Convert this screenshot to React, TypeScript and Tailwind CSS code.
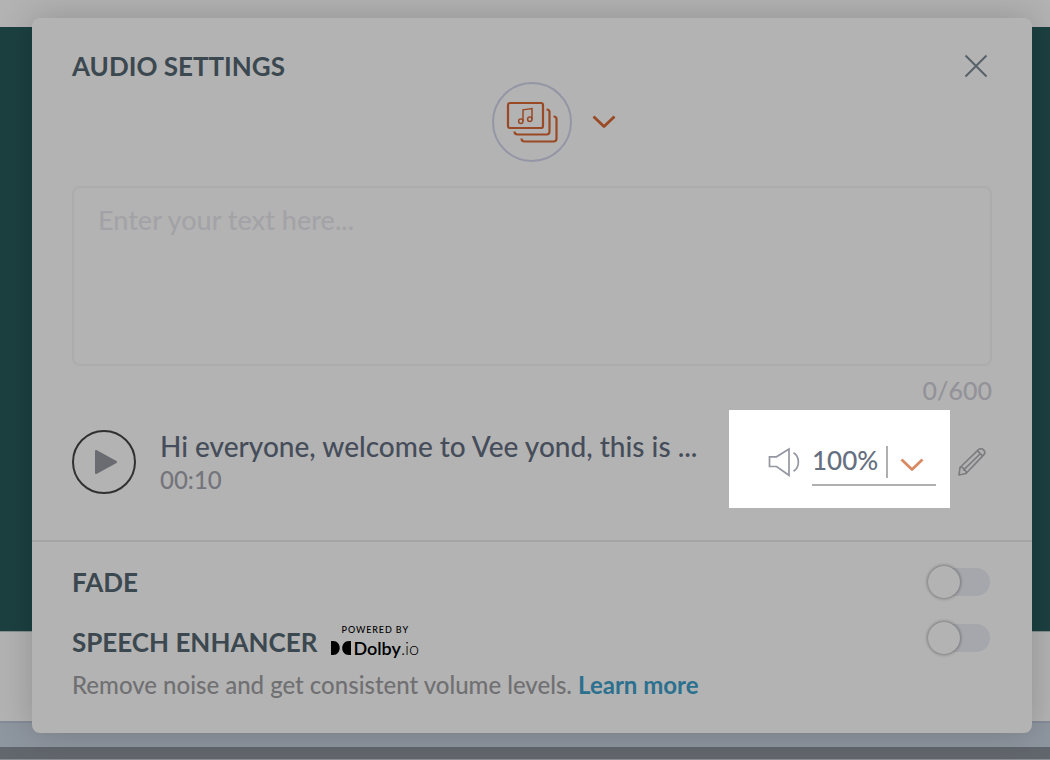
import { useState } from "react";

function Chevron({ className }: { className?: string }) {
  return (
    <svg viewBox="0 0 24 14" className={className} fill="none" stroke="currentColor" strokeWidth="2.8" aria-hidden="true">
      <path d="M1.5 1.5 12 11.5l10.5-10" strokeLinejoin="round" />
    </svg>
  );
}

function MusicLibraryIcon() {
  return (
    <svg viewBox="0 0 52 42" className="h-[42px] w-[52px]" fill="none" stroke="currentColor" strokeWidth="2.2" aria-hidden="true">
      <rect x="2" y="2" width="35" height="25" rx="2" />
      <path d="M40.5 8.500c2 0 3 .8 3 2.500v19.500c0 2-1 3-3 3H11.500c-2 0-3-1-3-3" />
      <path d="M47.5 15.500c2 0 3 .8 3 2.500v19.500c0 2-1 3-3 3H18.500c-2 0-3-1-3-3" />
      <g strokeWidth="1.5">
        <path d="M17 20.300V8.800l9-1.300v11" />
        <circle cx="14.800" cy="20.300" r="2.200" />
        <circle cx="23.800" cy="18.300" r="2.200" />
      </g>
    </svg>
  );
}

function SpeakerIcon() {
  return (
    <svg viewBox="0 0 32 30" className="h-[30px] w-8 shrink-0 text-[#9496a1]" fill="none" stroke="currentColor" strokeWidth="1.7" aria-hidden="true">
      <path d="M1.5 9.8h7L21 2v26.3l-12.5-8.800h-7z" />
      <path d="M25.5 5.800c6.500 4 6.500 14.500 0 18.500" />
    </svg>
  );
}

function PencilIcon() {
  return (
    <svg viewBox="0 0 28 28" className="size-7" fill="none" stroke="currentColor" strokeWidth="1.7" strokeLinejoin="round" aria-hidden="true">
      <path d="M1 27l1-7.500L20.500 1.700c1.500-1.300 3.500-1.200 5 .2 1.500 1.500 1.600 3.500.2 5L8 25.500z" />
      <path d="M2 19.500c2-.8 3.500.2 3.700 2.300 1.900.2 2.900 1.700 2.300 3.700M5.700 21.800 22 6M19.500 2.800l5.300 5.400" />
    </svg>
  );
}

function Toggle({ label }: { label: string }) {
  const [on, setOn] = useState(false);
  return (
    <label className="relative mr-0.5 flex h-7 w-[62px] shrink-0 cursor-pointer items-center rounded-full bg-[#a6a7ac]">
      <input
        type="checkbox"
        aria-label={label}
        checked={on}
        onChange={() => setOn(!on)}
        className="peer absolute inset-0 cursor-pointer opacity-0"
      />
      <span className="pointer-events-none absolute -top-0.5 left-0 size-8 rounded-full bg-[#b3b3b3] shadow-[0_0_3px_1px_rgba(0,0,0,0.3)] peer-checked:left-8" />
    </label>
  );
}

function DolbyMark() {
  return (
    <div className="flex flex-col items-center text-black">
      <span className="text-[9px] leading-[12px] font-medium tracking-widest">POWERED BY</span>
      <div className="flex items-center gap-0.5">
        <svg viewBox="0 0 20 14" className="h-3.5 w-5" fill="currentColor" aria-hidden="true">
          <path d="M0 0h2c9 0 9 14 0 14H0zM20 0h-2c-9 0-9 14 0 14h2z" />
        </svg>
        <span className="text-[18px] leading-[24px] font-semibold">
          Dolby<span className="font-light">.io</span>
        </span>
      </div>
    </div>
  );
}

export default function App() {
  const [text, setText] = useState("");
  return (
    <div className="relative min-h-screen font-[Lato,sans-serif] text-[#3c4850]">
      <div className="absolute inset-0 flex flex-col" aria-hidden="true">
        <div className="h-[27px] bg-[#b3b3b3]" />
        <div className="flex-1 bg-[#1c4040]" />
        <div className="h-[90px] border-t border-[#869090] bg-[#b3b3b3]" />
        <div className="h-[26px] border-t-2 border-[#858c97] bg-[#8e969f]" />
        <div className="h-[13px] border-b border-[#8b8f97] bg-[#62666d]" />
      </div>

      <div className="relative px-[18px] pt-[18px] pb-[27px] pl-8">
        <main role="dialog" aria-labelledby="title" className="rounded-lg bg-[#b3b3b3] shadow-[0_0_36px_rgba(0,0,0,0.2)]">
          <section className="border-b-2 border-[#a4a4a4] px-10 pt-8 pb-8">
            <header className="flex h-8 items-center justify-between">
              <h1 id="title" className="text-[26px] leading-8 font-bold">AUDIO SETTINGS</h1>
              <button type="button" aria-label="Close" className="p-1 text-[#596168]">
                <svg viewBox="0 0 24 24" className="size-6" fill="none" stroke="currentColor" strokeWidth="2" aria-hidden="true">
                  <path d="M1.5 1.5l21 21M22.5 1.5l-21 21" />
                </svg>
              </button>
            </header>

            <div className="grid grid-cols-[1fr_auto_1fr] items-center text-[#994a24]">
              <button type="button" aria-label="Audio library" className="col-start-2 flex size-20 items-center justify-center rounded-full border-2 border-[#9496a6]">
                <MusicLibraryIcon />
              </button>
              <button type="button" aria-label="Choose audio source" className="ml-5 justify-self-start">
                <Chevron className="h-3.5 w-6" />
              </button>
            </div>

            <textarea
              aria-label="Your text"
              placeholder="Enter your text here..."
              maxLength={600}
              value={text}
              onChange={(e) => setText(e.target.value)}
              className="mt-6 block h-[180px] w-full resize-none rounded-lg border-2 border-[#acacad] bg-transparent px-6 py-4 text-[27px] leading-8 font-medium outline-none placeholder:text-[#a3a3a7]"
            />
            <p className="h-11 pt-2 text-right text-[25px] leading-8 font-medium text-[#929298]">{text.length}/600</p>

            <div className="flex h-[98px] items-center">
              <button type="button" aria-label="Play" className="mt-1.5 flex size-16 shrink-0 items-center justify-center rounded-full border-2 border-[#303030] text-[#6b6c72]">
                <svg viewBox="0 0 24 26" className="ml-1 h-[26px] w-6" fill="currentColor" stroke="currentColor" strokeWidth="2" strokeLinejoin="round" aria-hidden="true">
                  <path d="M2 2l20 11L2 24z" />
                </svg>
              </button>
              <div className="mt-1.5 ml-6 min-w-0 flex-1">
                <p className="truncate text-[28px] leading-9 font-medium text-[#464d5a]">Hi everyone, welcome to Vee yond, this is ...</p>
                <p className="text-[24px] leading-8 font-medium text-[#73747c]">00:10</p>
              </div>
              <div className="flex h-full w-[221px] shrink-0 items-center gap-3 bg-white pt-1.5 pr-3.5 pl-[39px]">
                <SpeakerIcon />
                <div className="relative flex-1 border-b-2 border-[#b0b0b3] pt-0.5 pb-1">
                  <select aria-label="Volume" defaultValue="100%" className="block h-10 w-full appearance-none bg-transparent text-[26px] leading-10 font-medium text-[#667080] outline-none">
                    <option>100%</option>
                    <option>75%</option>
                    <option>50%</option>
                    <option>25%</option>
                  </select>
                  <span className="pointer-events-none absolute top-2 right-3 flex h-8 items-center border-l-2 border-[#b0b0b3] pl-3 text-[#d98a64]">
                    <Chevron className="mt-1.5 h-3.5 w-6" />
                  </span>
                </div>
              </div>
              <button type="button" aria-label="Edit" className="mt-1.5 mr-1.5 ml-2 shrink-0 text-[#7d7d80]">
                <PencilIcon />
              </button>
            </div>
          </section>

          <section className="px-10 pt-5 pb-[33px]">
            <div className="flex h-10 items-center justify-between">
              <h2 className="text-[26px] leading-8 font-bold">FADE</h2>
              <Toggle label="Fade" />
            </div>
            <div className="mt-4 flex h-10 items-center justify-between">
              <div className="flex items-center gap-3.5 pt-2">
                <h2 className="text-[26px] leading-8 font-bold">SPEECH ENHANCER</h2>
                <DolbyMark />
              </div>
              <Toggle label="Speech enhancer" />
            </div>
            <p className="mt-3 text-[24px] leading-[30px] font-medium text-[#707072]">
              Remove noise and get consistent volume levels.{" "}
              <a href="#learn-more" className="font-bold text-[#2c708f]">Learn more</a>
            </p>
          </section>
        </main>
      </div>
    </div>
  );
}
